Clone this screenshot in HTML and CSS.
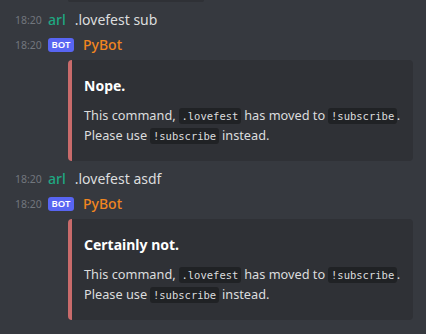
FILE: index.html
```html
<!DOCTYPE html>
<html>
<head>
<meta charset="utf-8">
<link rel="stylesheet" href="styles.css">
</head>
<body>
<div class="chat">
  <div class="prev-tail"></div>

  <div class="group">
    <div class="row">
      <span class="time">18:20</span>
      <span class="user user-arl">arl</span>
      <span class="text">.lovefest sub</span>
    </div>
    <div class="row row-bot">
      <span class="time">18:20</span>
      <span class="badge">BOT</span>
      <span class="user user-bot">PyBot</span>
    </div>
    <div class="embed-wrap">
      <div class="embed">
        <div class="embed-title">Nope.</div>
        <div class="embed-desc">This command, <code>.lovefest</code> has moved to <code>!subscribe</code>.<br>Please use <code>!subscribe</code> instead.</div>
      </div>
    </div>
  </div>

  <div class="group">
    <div class="row">
      <span class="time">18:20</span>
      <span class="user user-arl">arl</span>
      <span class="text">.lovefest asdf</span>
    </div>
    <div class="row row-bot">
      <span class="time">18:20</span>
      <span class="badge">BOT</span>
      <span class="user user-bot">PyBot</span>
    </div>
    <div class="embed-wrap">
      <div class="embed">
        <div class="embed-title">Certainly not.</div>
        <div class="embed-desc">This command, <code>.lovefest</code> has moved to <code>!subscribe</code>.<br>Please use <code>!subscribe</code> instead.</div>
      </div>
    </div>
  </div>
</div>
</body>
</html>
```

FILE: styles.css
```css
html, body {
  margin: 0;
  padding: 0;
  background: #36393f;
  height: 100%;
  overflow: hidden;
}

body {
  font-family: "Noto Sans", "Open Sans", sans-serif;
  color: #dcddde;
}

.chat {
  display: flex;
  flex-direction: column;
}

.prev-tail {
  margin-left: 68px;
  width: 136px;
  height: 2px;
  background: #2f3136;
  border-radius: 0 0 3px 3px;
  margin-bottom: 7px;
}

.group {
  display: flex;
  flex-direction: column;
  gap: 3px;
  margin-bottom: 7px;
}

.row {
  display: flex;
  align-items: center;
  height: 22px;
  padding-left: 15px;
  font-size: 14px;
  line-height: 22px;
}

.time {
  width: 33px;
  font-size: 10.5px;
  color: #72767d;
  flex-shrink: 0;
}

.user {
  font-weight: 500;
}

.user-arl {
  color: #1fa882;
  margin-right: 9px;
}

.user-bot {
  color: #f0861f;
}

.text {
  color: #dcddde;
}

.badge {
  display: inline-flex;
  align-items: center;
  justify-content: center;
  width: 26px;
  height: 14px;
  background: #5865f2;
  color: #ffffff;
  font-size: 9.5px;
  font-weight: 600;
  border-radius: 3px;
  margin-right: 9px;
  line-height: 14px;
}

.embed-wrap {
  padding-left: 68px;
  margin-top: 1px;
}

.embed {
  width: 345px;
  box-sizing: border-box;
  background: #2f3136;
  border-left: 4px solid #c96b6b;
  border-radius: 4px;
  padding: 17px 14px 15px 12px;
}

.embed-title {
  color: #ffffff;
  font-weight: 700;
  font-size: 14px;
  line-height: 18px;
}

.embed-desc {
  margin-top: 11px;
  font-size: 12.75px;
  line-height: 19px;
  color: #dcddde;
  white-space: nowrap;
}

code {
  font-family: "DejaVu Sans Mono", "Liberation Mono", monospace;
  font-size: 10.5px;
  background: #202225;
  border-radius: 3px;
  padding: 2px 2.5px;
  color: #dcddde;
}
```
